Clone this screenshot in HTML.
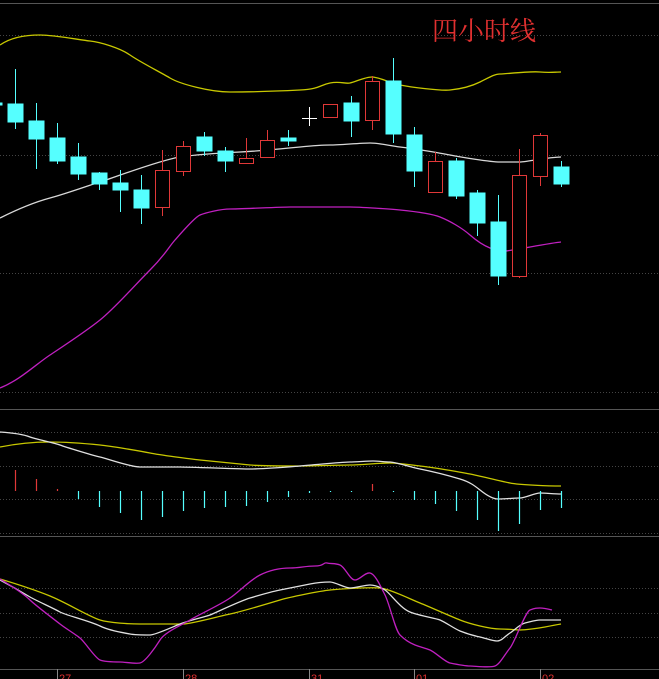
<!DOCTYPE html>
<html><head><meta charset="utf-8"><style>
html,body{margin:0;padding:0;background:#000;width:659px;height:679px;overflow:hidden}
svg{display:block}
</style></head><body>
<svg width="659" height="679" viewBox="0 0 659 679" xmlns="http://www.w3.org/2000/svg">
<rect width="659" height="679" fill="#000"/>
<g stroke="#555" stroke-width="1">
<line x1="0" y1="3.5" x2="659" y2="3.5"/>
<line x1="0" y1="409.5" x2="659" y2="409.5"/>
<line x1="0" y1="536.5" x2="659" y2="536.5"/>
<line x1="0" y1="669.5" x2="659" y2="669.5"/>
</g>
<g stroke="#444" stroke-width="1" stroke-dasharray="1,2">
<line x1="0" y1="35.5" x2="659" y2="35.5"/>
<line x1="0" y1="155.5" x2="659" y2="155.5"/>
<line x1="0" y1="273.5" x2="659" y2="273.5"/>
<line x1="0" y1="392.5" x2="659" y2="392.5"/>
<line x1="0" y1="432.5" x2="659" y2="432.5"/>
<line x1="0" y1="466.5" x2="659" y2="466.5"/>
<line x1="0" y1="499.5" x2="659" y2="499.5"/>
<line x1="0" y1="533.5" x2="659" y2="533.5"/>
<line x1="0" y1="588.5" x2="659" y2="588.5"/>
<line x1="0" y1="613.5" x2="659" y2="613.5"/>
<line x1="0" y1="637.5" x2="659" y2="637.5"/>
</g>
<text x="432" y="40" fill="#e03030" font-size="26" font-family="'Liberation Serif','Noto Serif CJK SC',serif">四小时线</text>

<g fill="none" stroke-width="1.3">
<path stroke="#c8c800" d="M0,45 C10,38 25,35 40,35 S80,40 90,41 S120,48 130,55 S160,72 170,78 S210,92 230,92 S280,91 300,90 S320,85 330,83 S345,84 350,83 S365,77 372,77 S390,83 400,85 S440,91 450,90 S470,87 480,82 S495,74 500,74 S530,71 540,72 S555,72 561,72"/>
<path stroke="#d8d8d8" d="M0,218 C20,208 35,202 50,198 S90,185 100,182 S160,160 180,157 S220,153 240,152 S290,148 300,147 S320,145 330,145 S360,143 370,143 S390,146 400,147 S440,153 450,155 S490,162 500,162 S515,162 520,162 S550,157 561,157"/>
<path stroke="#c020c0" d="M0,388 C20,380 35,365 50,355 S85,332 100,320 S135,285 150,270 S168,248 175,240 S195,217 200,215 S220,209 230,209 S280,207 290,207 S340,207 350,207 S390,209 400,210 S430,213 440,217 S462,228 470,235 S485,246 490,248 S500,251 505,251 S550,243 561,242"/>
</g>

<g stroke-width="1">
<g fill="#55ffff" stroke="#55ffff">
<line x1="15.5" y1="69" x2="15.5" y2="129"/><rect x="8" y="104" width="15" height="18"/>
<rect x="0" y="103" width="2" height="2"/>
<line x1="36.5" y1="103" x2="36.5" y2="169"/><rect x="29" y="121" width="15" height="18"/>
<line x1="57.5" y1="123" x2="57.5" y2="164"/><rect x="50" y="138" width="15" height="23"/>
<line x1="78.5" y1="143" x2="78.5" y2="180"/><rect x="71" y="157" width="15" height="17"/>
<line x1="99.5" y1="172" x2="99.5" y2="190"/><rect x="92" y="173" width="15" height="11"/>
<line x1="120.5" y1="170" x2="120.5" y2="212"/><rect x="113" y="183" width="15" height="7"/>
<line x1="141.5" y1="175" x2="141.5" y2="224"/><rect x="134" y="190" width="15" height="18"/>
<line x1="204.5" y1="132" x2="204.5" y2="156"/><rect x="197" y="137" width="15" height="14"/>
<line x1="225.5" y1="147" x2="225.5" y2="172"/><rect x="218" y="151" width="15" height="10"/>
<line x1="288.5" y1="130" x2="288.5" y2="146"/><rect x="281" y="138" width="15" height="3"/>
<line x1="351.5" y1="96" x2="351.5" y2="137"/><rect x="344" y="103" width="15" height="18"/>
<line x1="393.5" y1="58" x2="393.5" y2="143"/><rect x="386" y="81" width="15" height="53"/>
<line x1="414.5" y1="127" x2="414.5" y2="187"/><rect x="407" y="135" width="15" height="36"/>
<line x1="456.5" y1="158" x2="456.5" y2="199"/><rect x="449" y="161" width="15" height="35"/>
<line x1="477.5" y1="190" x2="477.5" y2="236"/><rect x="470" y="193" width="15" height="30"/>
<line x1="498.5" y1="195" x2="498.5" y2="285"/><rect x="491" y="222" width="15" height="54"/>
<line x1="561.5" y1="161" x2="561.5" y2="187"/><rect x="554" y="167" width="15" height="17"/>
</g>
<g fill="#000" stroke="#e03838">
<line x1="162.5" y1="150" x2="162.5" y2="216"/><rect x="155.5" y="170.5" width="14" height="37"/>
<line x1="183.5" y1="141" x2="183.5" y2="176"/><rect x="176.5" y="146.5" width="14" height="25"/>
<line x1="246.5" y1="138" x2="246.5" y2="164"/><rect x="239.5" y="158.5" width="14" height="5"/>
<line x1="267.5" y1="130" x2="267.5" y2="157"/><rect x="260.5" y="140.5" width="14" height="17"/>
<rect x="323.5" y="104.5" width="14" height="13"/>
<line x1="372.5" y1="76" x2="372.5" y2="130"/><rect x="365.5" y="81.5" width="14" height="39"/>
<line x1="435.5" y1="152" x2="435.5" y2="192"/><rect x="428.5" y="161.5" width="14" height="31"/>
<line x1="519.5" y1="149" x2="519.5" y2="278"/><rect x="512.5" y="175.5" width="14" height="101"/>
<line x1="540.5" y1="133" x2="540.5" y2="186"/><rect x="533.5" y="135.5" width="14" height="41"/>
</g>
<g stroke="#fff"><line x1="309.5" y1="107" x2="309.5" y2="126"/><line x1="302" y1="118.5" x2="317" y2="118.5"/></g>
</g>

<g fill="none" stroke-width="1.3">
<path stroke="#c8c800" d="M0,447 C20,443 35,442 50,442 S90,444 100,445 S140,451 150,453 S190,459 200,460 S240,464 250,465 S290,466 300,466 S340,465 350,465 S380,463 390,463 S410,465 420,466 S460,472 470,474 S500,481 510,483 S550,486 561,486"/>
<path stroke="#e0e0e0" d="M0,432 C15,433 25,435 30,437 S55,443 60,445 S95,456 100,457 S130,467 140,467 S170,467 180,467 S240,469 250,469 S290,467 300,466 S345,462 350,462 S368,461 373,461 S385,462 390,462 S410,467 420,469 S450,476 460,479 S475,486 480,490 S492,499 498,499 S515,498 520,498 S535,493 540,493 S555,494 561,494"/>
</g>
<g stroke-width="1.2">
<g stroke="#e03838">
<line x1="15.5" y1="470" x2="15.5" y2="491"/><line x1="36.5" y1="479" x2="36.5" y2="491"/><line x1="57.5" y1="489" x2="57.5" y2="491"/><line x1="372.5" y1="484" x2="372.5" y2="491"/>
</g>
<g stroke="#55ffff">
<line x1="78.5" y1="491" x2="78.5" y2="499"/><line x1="99.5" y1="491" x2="99.5" y2="507"/><line x1="120.5" y1="491" x2="120.5" y2="513"/><line x1="141.5" y1="491" x2="141.5" y2="520"/><line x1="162.5" y1="491" x2="162.5" y2="517"/><line x1="183.5" y1="491" x2="183.5" y2="511"/><line x1="204.5" y1="491" x2="204.5" y2="508"/><line x1="225.5" y1="491" x2="225.5" y2="507"/><line x1="246.5" y1="491" x2="246.5" y2="506"/><line x1="267.5" y1="491" x2="267.5" y2="502"/><line x1="288.5" y1="491" x2="288.5" y2="497"/><line x1="309.5" y1="491" x2="309.5" y2="493"/><line x1="330.5" y1="491" x2="330.5" y2="492"/><line x1="351.5" y1="491" x2="351.5" y2="492"/><line x1="393.5" y1="491" x2="393.5" y2="492"/><line x1="414.5" y1="491" x2="414.5" y2="500"/><line x1="435.5" y1="491" x2="435.5" y2="504"/><line x1="456.5" y1="491" x2="456.5" y2="511"/><line x1="477.5" y1="491" x2="477.5" y2="520"/><line x1="498.5" y1="491" x2="498.5" y2="531"/><line x1="519.5" y1="491" x2="519.5" y2="524"/><line x1="540.5" y1="491" x2="540.5" y2="510"/><line x1="561.5" y1="491" x2="561.5" y2="508"/>
</g></g>

<g fill="none" stroke-width="1.3">
<path stroke="#c8c800" d="M0,579 C20,585 35,590 50,596 S90,617 100,620 S130,624 140,624 S175,624 183,624 S220,616 230,614 S270,603 280,600 S320,591 330,590 S370,587 380,588 S410,599 420,603 S450,616 460,620 S490,629 500,629 S515,630 520,630 S540,628 545,627 S555,625 561,624"/>
<path stroke="#e0e0e0" d="M0,580 C15,588 25,594 30,597 S55,609 60,612 S90,621 100,626 S125,633 130,634 S145,635 150,635 S170,628 180,624 S205,617 210,615 S240,601 250,598 S275,591 280,590 S305,585 310,584 S325,582 330,582 S345,588 350,588 S365,585 370,585 S380,587 385,590 S400,608 410,612 S435,618 440,620 S455,629 460,631 S475,636 480,637 S492,641 497,641 S505,636 510,633 S520,624 525,623 S535,620 540,620 S555,620 561,620"/>
<path stroke="#c020c0" d="M0,579 C15,588 25,595 30,600 S55,620 60,624 S75,634 80,638 S95,658 100,660 S115,662 120,662 S135,664 140,663 S155,648 160,640 S180,626 190,620 S220,605 230,598 S250,580 260,575 S280,568 290,568 S305,566 315,566 S323,562 327,563 S335,563 340,565 S350,580 355,580 S365,572 370,573 S380,585 385,595 S395,630 400,635 S410,643 415,645 S425,648 430,650 S445,662 450,663 S465,666 470,666 S490,668 495,666 S505,654 510,648 S525,612 530,610 S537,608 540,608 S548,609 552,610"/>
</g>

<g stroke="#888" stroke-width="1">
<line x1="57.5" y1="669" x2="57.5" y2="679"/><line x1="183.5" y1="669" x2="183.5" y2="679"/><line x1="309.5" y1="669" x2="309.5" y2="679"/><line x1="414.5" y1="669" x2="414.5" y2="679"/><line x1="540.5" y1="669" x2="540.5" y2="679"/>
</g>
<g fill="#e03030" font-size="11" font-family="'Liberation Sans',sans-serif">
<text x="59" y="682">27</text><text x="185" y="682">28</text><text x="311" y="682">31</text><text x="416" y="682">01</text><text x="542" y="682">02</text>
</g>
</svg>
</body></html>
